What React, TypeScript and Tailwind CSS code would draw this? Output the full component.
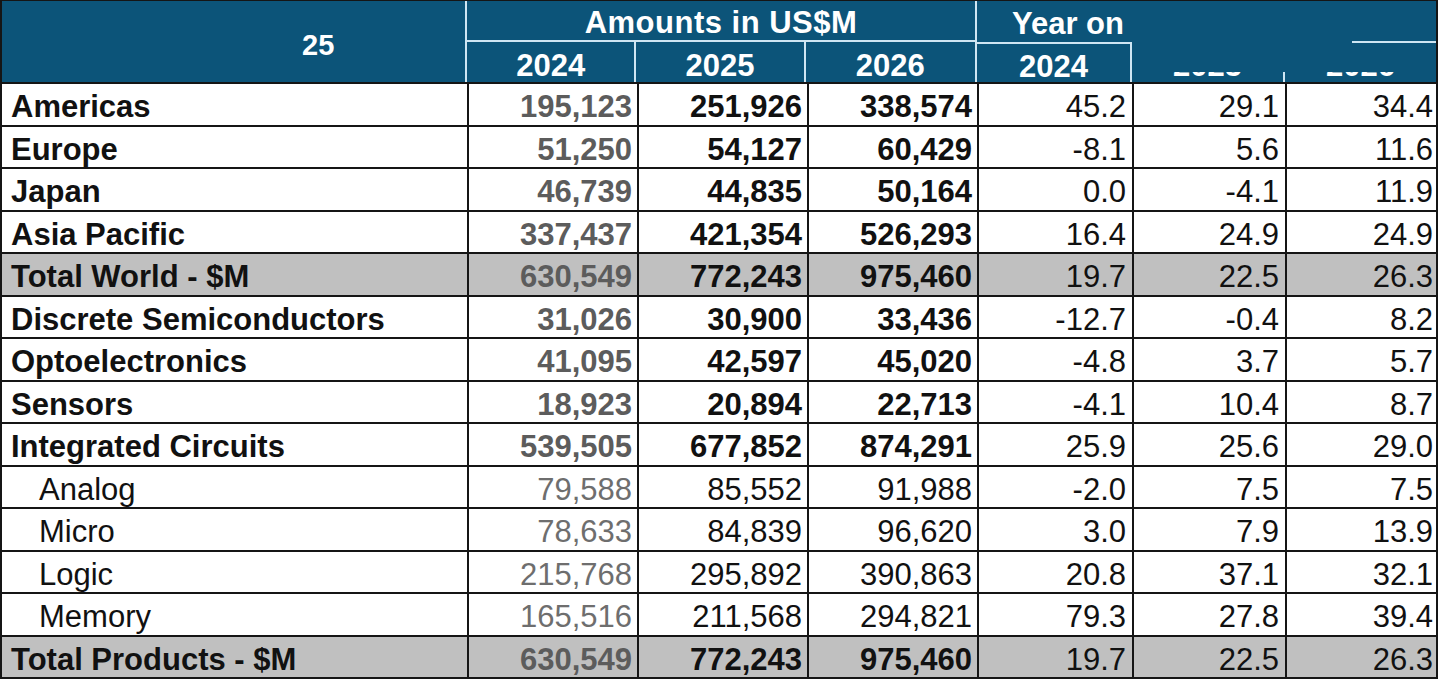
import React from 'react';

type Row = {
  label: string;
  v: string[];
  g: string[];
  bold?: boolean;
  sub?: boolean;
  total?: boolean;
};

const rows: Row[] = [
  { label: 'Americas', v: ['195,123', '251,926', '338,574'], g: ['45.2', '29.1', '34.4'], bold: true },
  { label: 'Europe', v: ['51,250', '54,127', '60,429'], g: ['-8.1', '5.6', '11.6'], bold: true },
  { label: 'Japan', v: ['46,739', '44,835', '50,164'], g: ['0.0', '-4.1', '11.9'], bold: true },
  { label: 'Asia Pacific', v: ['337,437', '421,354', '526,293'], g: ['16.4', '24.9', '24.9'], bold: true },
  { label: 'Total World - $M', v: ['630,549', '772,243', '975,460'], g: ['19.7', '22.5', '26.3'], bold: true, total: true },
  { label: 'Discrete Semiconductors', v: ['31,026', '30,900', '33,436'], g: ['-12.7', '-0.4', '8.2'], bold: true },
  { label: 'Optoelectronics', v: ['41,095', '42,597', '45,020'], g: ['-4.8', '3.7', '5.7'], bold: true },
  { label: 'Sensors', v: ['18,923', '20,894', '22,713'], g: ['-4.1', '10.4', '8.7'], bold: true },
  { label: 'Integrated Circuits', v: ['539,505', '677,852', '874,291'], g: ['25.9', '25.6', '29.0'], bold: true },
  { label: 'Analog', v: ['79,588', '85,552', '91,988'], g: ['-2.0', '7.5', '7.5'], sub: true },
  { label: 'Micro', v: ['78,633', '84,839', '96,620'], g: ['3.0', '7.9', '13.9'], sub: true },
  { label: 'Logic', v: ['215,768', '295,892', '390,863'], g: ['20.8', '37.1', '32.1'], sub: true },
  { label: 'Memory', v: ['165,516', '211,568', '294,821'], g: ['79.3', '27.8', '39.4'], sub: true },
  { label: 'Total Products - $M', v: ['630,549', '772,243', '975,460'], g: ['19.7', '22.5', '26.3'], bold: true, total: true },
];

const widths = ['w-[170px]', 'w-[170px]', 'w-[170px]', 'w-[155px]', 'w-[153px]', 'w-[152px]'];

const DataRow = ({ row }: { row: Row }) => {
  const bg = row.total ? 'bg-[#c0c0c0]' : 'bg-white';
  return (
    <div className={`flex h-[42.5px] border-b-2 border-[#151515] ${bg}`}>
      <div
        className={`w-[467px] shrink-0 flex items-center pt-[5px] border-r-2 border-[#151515] ${
          row.sub ? 'pl-[37px] font-normal' : 'pl-[9px] font-bold'
        }`}
      >
        {row.label}
      </div>
      {row.v.map((val, i) => (
        <div
          key={'v' + i}
          className={`${widths[i]} shrink-0 flex items-center justify-end pt-[5px] pr-[5px] border-r-2 border-[#151515] ${
            row.bold ? 'font-bold' : 'font-normal'
          } ${i === 0 ? (row.bold ? 'text-[#5c5c5c]' : 'text-[#6e6e6e]') : 'text-[#111]'}`}
        >
          {val}
        </div>
      ))}
      {row.g.map((val, i) => (
        <div
          key={'g' + i}
          className={`${widths[i + 3]} shrink-0 flex items-center justify-end pt-[5px] pr-[6px] font-normal text-[#111] ${
            i < 2 ? 'border-r-2 border-[#151515]' : ''
          }`}
        >
          {val}
        </div>
      ))}
    </div>
  );
};

export default function App() {
  return (
    <div className="w-[1440px] h-[682px] bg-white overflow-hidden">
      <div
        className="w-[1438px] border-t border-l-2 border-r-2 border-[#151515] text-[31px] leading-none text-[#111]"
        style={{ fontFamily: '"Liberation Sans", Arial, sans-serif' }}
      >
        {/* header */}
        <div className="flex h-[83px] bg-[#0c5479] text-white font-bold border-b-2 border-[#151515]">
          <div className="w-[465px] shrink-0 flex items-center pl-[300px] pt-[8px] text-[29px] border-r-2 border-[#cfe6f3]">
            25
          </div>
          <div className="w-[510px] shrink-0 flex flex-col border-r-2 border-[#cfe6f3]">
            <div className="h-[41px] flex items-center justify-center pt-[3px] tracking-[0.5px] border-b-2 border-[#cfe6f3]">
              Amounts in US$M
            </div>
            <div className="flex flex-1">
              <div className="w-[170px] flex items-center justify-center pt-[6px] border-r-2 border-[#cfe6f3]">2024</div>
              <div className="w-[170px] flex items-center justify-center pt-[6px] border-r-2 border-[#cfe6f3]">2025</div>
              <div className="w-[170px] flex items-center justify-center pt-[6px]">2026</div>
            </div>
          </div>
          <div className="flex-1 flex flex-col relative">
            <div className="h-[41px] flex items-center pl-[35px] pt-[3px]">
              <span>Year on</span>
            </div>
            <div className="flex flex-1">
              <div className="w-[155px] flex items-center justify-center pt-[6px] border-r-2 border-t-2 border-[#cfe6f3]">
                2024
              </div>
              <div className="w-[153px] flex items-center justify-center pt-[6px] border-r-2 border-[#cfe6f3]">2025</div>
              <div className="flex-1 flex items-center justify-center pt-[6px]">2026</div>
            </div>
            {/* obscured part of the header */}
            <div className="absolute left-[156px] top-0 right-0 h-[71px] bg-[#0c5479]">
              <div className="absolute right-0 top-[40px] w-[84px] h-[2px] bg-[#cfe6f3]" />
            </div>
          </div>
        </div>
        {rows.map((r) => (
          <DataRow key={r.label + (r.total ? 't' : '')} row={r} />
        ))}
      </div>
    </div>
  );
}
